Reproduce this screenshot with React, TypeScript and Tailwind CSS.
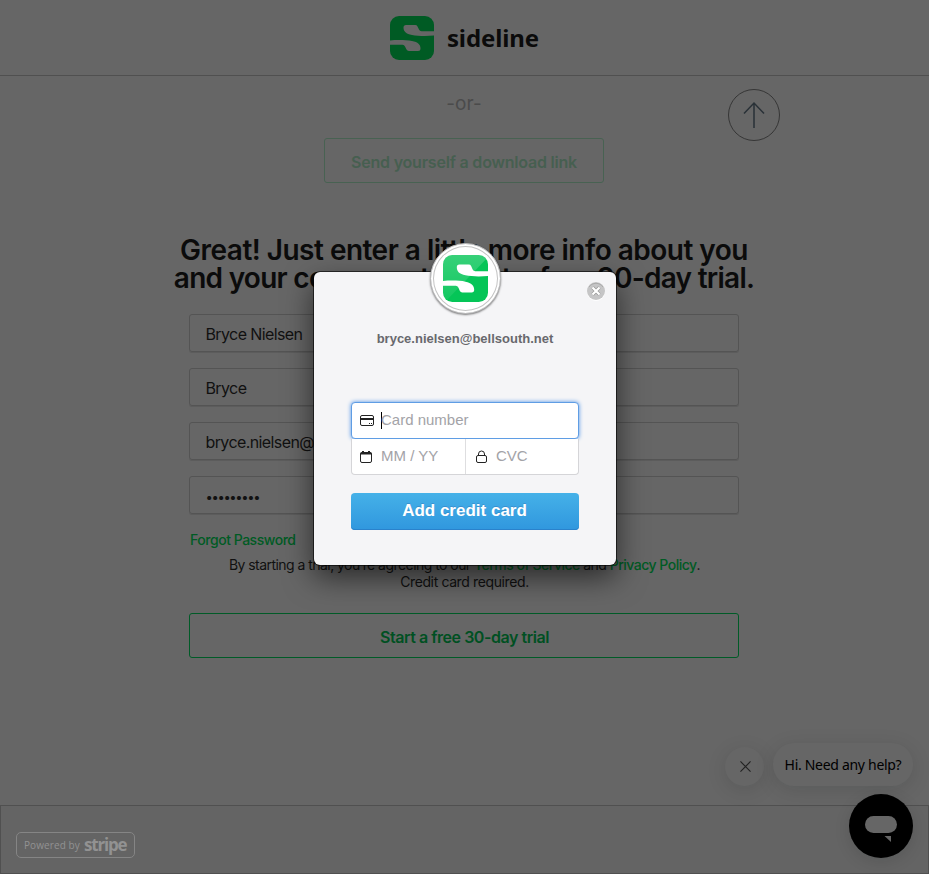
import React from "react";

function LogoMark({ className, fill, cut, shine = false }: { className: string; fill: string; cut: string; shine?: boolean }) {
  return (
    <svg viewBox="0 0 44 44" preserveAspectRatio="none" className={className}>
      <defs>
        <linearGradient id="mark-shine" x1="0" y1="0" x2="0" y2="1">
          <stop offset="0" stopColor="#fff" stopOpacity=".2" />
          <stop offset="1" stopColor="#fff" stopOpacity=".06" />
        </linearGradient>
      </defs>
      <rect width="44" height="44" rx="9" fill={fill} />
      {shine && <path d="M9 0H35a9 9 0 0 1 7 4L4 42a9 9 0 0 1-4-7V9a9 9 0 0 1 9-9Z" fill="url(#mark-shine)" />}
      <path d="M44 15.200H31.500Q29.700 15.200 29 13.600L27.500 10.400Q26.800 9 25.200 9H16Q13.500 9 13.500 11.500C13.500 15.500 16 17.800 22 19C28 20.200 37 20.300 44 19.600Z" fill={cut} />
      <path d="M0 28.800H12.500Q14.300 28.800 15 30.400L16.500 33.600Q17.200 35 18.800 35H28Q30.500 35 30.500 32.500C30.500 28.500 28 26.200 22 25C16 23.800 7 23.700 0 24.400Z" fill={cut} />
    </svg>
  );
}

function Field({ children }: { children?: React.ReactNode }) {
  return (
    <div className="flex h-[38px] items-center rounded-[3px] border border-[#545454] pt-[2px] pl-[15.500px] text-[16px] tracking-[-0.6px] text-[#111] shadow-[0_1px_0_#5c5c5c]">
      <span className="whitespace-nowrap">{children}</span>
    </div>
  );
}

function CloseBadge() {
  return (
    <svg viewBox="0 0 20 20" className="absolute top-[9px] right-[10px] h-5 w-5">
      <circle cx="10" cy="11" r="9" fill="#fff" />
      <circle cx="10" cy="10" r="9" fill="#c5c5c6" />
      <path d="M3 6A8.500 8.500 0 0 1 17 6" fill="none" stroke="#aaa" />
      <path d="m6.600 6.600 6.800 6.800m0-6.800-6.800 6.800" stroke="#999" strokeWidth="3.500" />
      <path d="m6.500 6.500 7 7m0-7-7 7" stroke="#fff" strokeWidth="2.200" />
    </svg>
  );
}

function PaymentDialog() {
  return (
    <div className="absolute top-[272px] left-[314px] h-[293px] w-[302px] rounded-[6px] bg-[#f5f5f7] px-[37px] font-['Liberation_Sans',Arial,sans-serif] shadow-[0_0_0_1px_rgba(0,0,0,0.6),0_12px_30px_0_rgba(0,0,0,0.6)]">
      <div className="absolute top-[-29px] left-[116px] flex h-[71px] w-[71px] items-center justify-center rounded-full border border-[#b7b7b8] bg-white shadow-[0_1px_2px_rgba(0,0,0,0.5),inset_0_0_0_2px_#fff,inset_0_0_0_3px_#c4c4c4]">
        <LogoMark className="h-[47px] w-[45px]" fill="#05c557" cut="#fff" shine />
      </div>
      <CloseBadge />
      <div className="flex justify-center pt-[59px] text-[13px] leading-4 font-bold text-[#68686d]">
        <span className="whitespace-nowrap">bryce.nielsen@bellsouth.net</span>
      </div>
      <div className="mt-[55px] flex h-[37px] items-center rounded-[4px] border border-[#5f9de4] bg-white pl-2 text-[15px] text-[#a3a3a7] shadow-[0_0_4px_#4b91e7]">
        <svg viewBox="0 0 16 14" className="h-[14px] w-4" fill="none">
          <rect x="0.500" y="1.500" width="13" height="10" rx="1.500" stroke="#222" />
          <path d="M0 5h14" stroke="#222" strokeWidth="2" />
          <path d="M9 9.500h1m1 0h1" stroke="#222" />
        </svg>
        <span className="ml-[5px] h-[17px] w-px bg-black" />
        <span className="-ml-px whitespace-nowrap">Card number</span>
      </div>
      <div className="flex h-[36px] items-center rounded-b-[4px] border border-t-0 border-[#d5d5d8] bg-white text-[15px] text-[#a3a3a7]">
        <div className="flex h-full w-[114px] items-center border-r border-[#dedee0] pl-2">
          <svg viewBox="0 0 14 14" className="h-[14px] w-[14px]" fill="none">
            <rect x="0.500" y="2.500" width="11" height="10" rx="1.500" stroke="#222" />
            <path d="M0.500 3.500h11" stroke="#222" strokeWidth="2" />
            <path d="M3 1v2m6-2v2" stroke="#222" strokeWidth="2" />
          </svg>
          <span className="ml-[7px] whitespace-nowrap">MM / YY</span>
        </div>
        <div className="flex items-center pl-[10px]">
          <svg viewBox="0 0 12 14" className="h-[14px] w-3" fill="none" stroke="#222">
            <rect x="0.500" y="5.500" width="10" height="7" rx="1.500" />
            <path d="M2.500 5.500V4a3 3 0 0 1 6 0v1.500" />
          </svg>
          <span className="ml-[8px] whitespace-nowrap">CVC</span>
        </div>
      </div>
      <div className="mt-[18px] flex h-[37px] items-center justify-center rounded-[4px] bg-gradient-to-b from-[#45b1e8] to-[#3097de] pr-px pb-[2px] text-[17px] font-bold text-white shadow-[inset_0_-1px_0_#2a82cc] [text-shadow:0_-1px_0_rgba(46,86,153,0.3)]">
        <span className="whitespace-nowrap">Add credit card</span>
      </div>
    </div>
  );
}

export default function App() {
  return (
    <div className="relative flex h-[874px] w-[929px] flex-col overflow-hidden bg-[#666] font-['Inter',sans-serif]">
      <header className="flex h-[76px] shrink-0 items-center justify-center border-b border-[#505050]">
        <LogoMark className="h-11 w-11" fill="#005b24" cut="#666" />
        <span className="ml-[13px] pt-px font-['Noto_Sans',sans-serif] text-[24px] leading-none font-bold tracking-[-0.1px] text-[#0b0b0b]">sideline</span>
      </header>

      <main className="flex flex-1 flex-col items-center pr-px">
        <div className="mt-[16px] h-6 text-[19px] leading-6 text-[#4b4b4b]">-or-</div>
        <div className="mt-[22px] flex h-[45px] w-[280px] items-center justify-center rounded-[3px] border border-[#486252] pt-[2px] text-[16px] font-semibold tracking-[-0.2px] text-[#465f50]">
          <span className="whitespace-nowrap">Send yourself a download link</span>
        </div>
        <h1 className="mt-[53px] text-center text-[28px] leading-7 font-semibold tracking-[-0.52px] text-[#0b0b0b]">
          <span className="block whitespace-nowrap">Great! Just enter a little more info about you</span>
          <span className="block whitespace-nowrap tracking-[-0.73px]">and your company to start a free 30-day trial.</span>
        </h1>
        <div className="mt-[22px] flex w-[550px] flex-col gap-4">
          <Field>Bryce Nielsen</Field>
          <Field>Bryce</Field>
          <Field>bryce.nielsen@bellsouth.net</Field>
          <Field>
            <span className="text-[13px] tracking-[-1.35px]">•••••••••</span>
          </Field>
        </div>
        <div className="mt-4 w-[550px] pl-px text-[14px] leading-5 font-medium tracking-[-0.47px] text-[#005b24]">
          <span>Forgot Password</span>
        </div>
        <p className="mt-[6px] pl-px text-center text-[14px] leading-[17px] tracking-[-0.55px] text-[#111]">
          <span className="block whitespace-nowrap">
            By starting a trial, you’re agreeing to our <span className="font-medium tracking-[-0.5px] text-[#005b24]">Terms of Service</span> and{" "}
            <span className="font-medium tracking-[-0.5px] text-[#005b24]">Privacy Policy</span>.
          </span>
          <span className="block tracking-[-0.38px]">Credit card required.</span>
        </p>
        <div className="mt-[23px] flex h-[45px] w-[550px] items-center justify-center rounded-[3px] border border-[#005b27] pt-[2px] pl-px text-[16px] font-semibold tracking-[-0.46px] text-[#005022]">
          <span className="whitespace-nowrap">Start a free 30-day trial</span>
        </div>
      </main>

      <footer className="flex h-[69px] shrink-0 items-start border border-[#505050] bg-[#646464] pt-[26px] pl-[15px]">
        <div className="flex h-[26px] w-[119px] items-center rounded-[5px] border border-[#858585] pl-[7px] text-[#929292]">
          <span className="w-[60px] whitespace-nowrap font-['Open_Sans',sans-serif] text-[10px] font-medium tracking-[0.1px]">Powered by</span>
          <span className="pb-[2px] font-['Open_Sans',sans-serif] text-[17px] leading-none font-bold tracking-[-1.2px]">stripe</span>
        </div>
      </footer>

      <div className="absolute top-[89px] left-[728px] flex h-[52px] w-[52px] items-center justify-center rounded-full border border-[#363636]">
        <svg viewBox="0 0 24 28" className="h-7 w-6" fill="none" stroke="#293137" strokeWidth="1.500">
          <path d="M12 27V2M2 12.500 12 2l10 10.500" />
        </svg>
      </div>

      <div className="absolute top-[747px] left-[725px] flex h-[39px] w-[39px] items-center justify-center rounded-full bg-[#666] shadow-[0_4px_20px_rgba(0,20,20,0.12)]">
        <svg viewBox="0 0 12 12" className="-mt-px ml-px h-[11px] w-[11px]" stroke="#222" strokeWidth="1.200">
          <path d="m.5.5 11 11m0-11-11 11" />
        </svg>
      </div>
      <div className="absolute top-[743px] left-[773px] flex h-[43px] w-[140px] items-center justify-center rounded-[21px] bg-[#666] pb-px font-['Noto_Sans',sans-serif] text-[14px] tracking-[-0.3px] text-black shadow-[0_4px_20px_rgba(0,20,20,0.12)]">
        <span className="whitespace-nowrap">Hi. Need any help?</span>
      </div>
      <div className="absolute top-[794px] left-[849px] h-16 w-16 rounded-full bg-black shadow-[0_4px_16px_rgba(0,20,20,0.12)]">
        <svg viewBox="0 0 64 64" className="h-16 w-16" fill="#666">
          <rect x="16" y="22" width="32" height="17" rx="8.500" />
          <path d="M35.500 42H42v6Z" />
        </svg>
      </div>

      <PaymentDialog />
    </div>
  );
}
